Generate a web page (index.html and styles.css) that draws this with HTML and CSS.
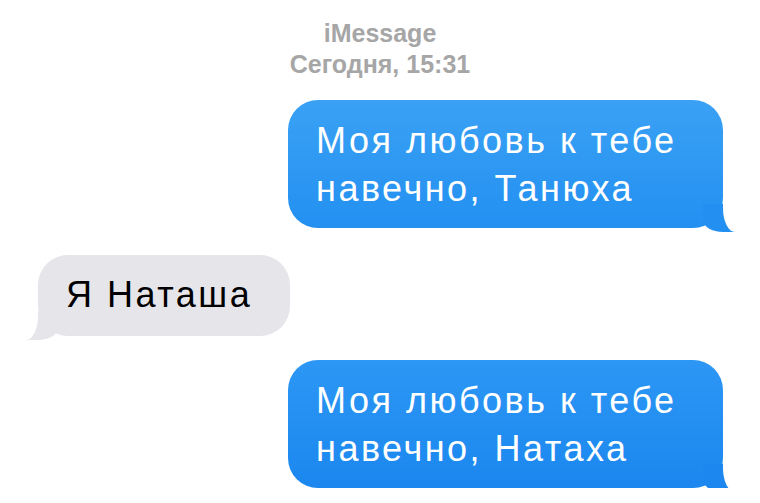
FILE: index.html
```html
<!DOCTYPE html>
<html lang="ru">
<head>
  <meta charset="UTF-8">
  <meta name="viewport" content="width=device-width, initial-scale=1.0">
  <title>iMessage</title>
  <link rel="stylesheet" href="styles.css">
</head>
<body>
  <div class="chat">
    <div class="chat-header">
      <div class="chat-service">iMessage</div>
      <div class="chat-date">Сегодня, 15:31</div>
    </div>
    <div class="thread">
      <div class="bubble sent first">Моя любовь к тебе навечно, Танюха</div>
      <div class="bubble received">Я Наташа</div>
      <div class="bubble sent last">Моя любовь к тебе навечно, Натаха</div>
    </div>
  </div>
</body>
</html>
```

FILE: styles.css
```css
body {
  margin: 0;
  background: #fff;
  font-family: 'Liberation Sans', Arial, sans-serif;
  color: #000;
}
.chat {
  padding-top: 18px;
}
.chat-header {
  text-align: center;
  color: #a6a6a6;
  font-size: 25px;
  line-height: 31px;
  font-weight: 700;
}
.thread {
  display: flex;
  flex-direction: column;
  padding: 20px 37px 0 38px;
}
.bubble {
  position: relative;
  z-index: 0;
  font-size: 36px;
  line-height: 48px;
  letter-spacing: 2.5px;
  padding: 17px 28px 15px 28px;
  border-radius: 30px;
}
.bubble.sent {
  align-self: flex-end;
  width: 435px;
  box-sizing: border-box;
  color: #fff;
  background: linear-gradient(180deg, var(--top) 0%, var(--bottom) 100%);
}
.bubble.first { --top: #3aa1f4; --bottom: #2390f1; }
.bubble.last { --top: #2c97f4; --bottom: #1b87ef; }
.bubble.received {
  align-self: flex-start;
  margin: 27px 0 24px;
  background: #e5e5ea;
  padding: 16px 38px 17px 28px;
}

/* tails: a coloured corner, then a white rounded cut-out beside it */
.bubble::before,
.bubble::after {
  content: "";
  position: absolute;
  z-index: -1;
  bottom: -4px;
  height: 28px;
}
.bubble.sent::before {
  right: -12px;
  width: 32px;
  background: var(--bottom);
  border-bottom-left-radius: 20px 12px;
}
.bubble.sent::after {
  right: -24px;
  width: 24px;
  background: #fff;
  border-bottom-left-radius: 12px 24px;
}
.bubble.received::before {
  left: -12px;
  width: 32px;
  background: #e5e5ea;
  border-bottom-right-radius: 20px 12px;
}
.bubble.received::after {
  left: -24px;
  width: 24px;
  background: #fff;
  border-bottom-right-radius: 12px 24px;
}
```
